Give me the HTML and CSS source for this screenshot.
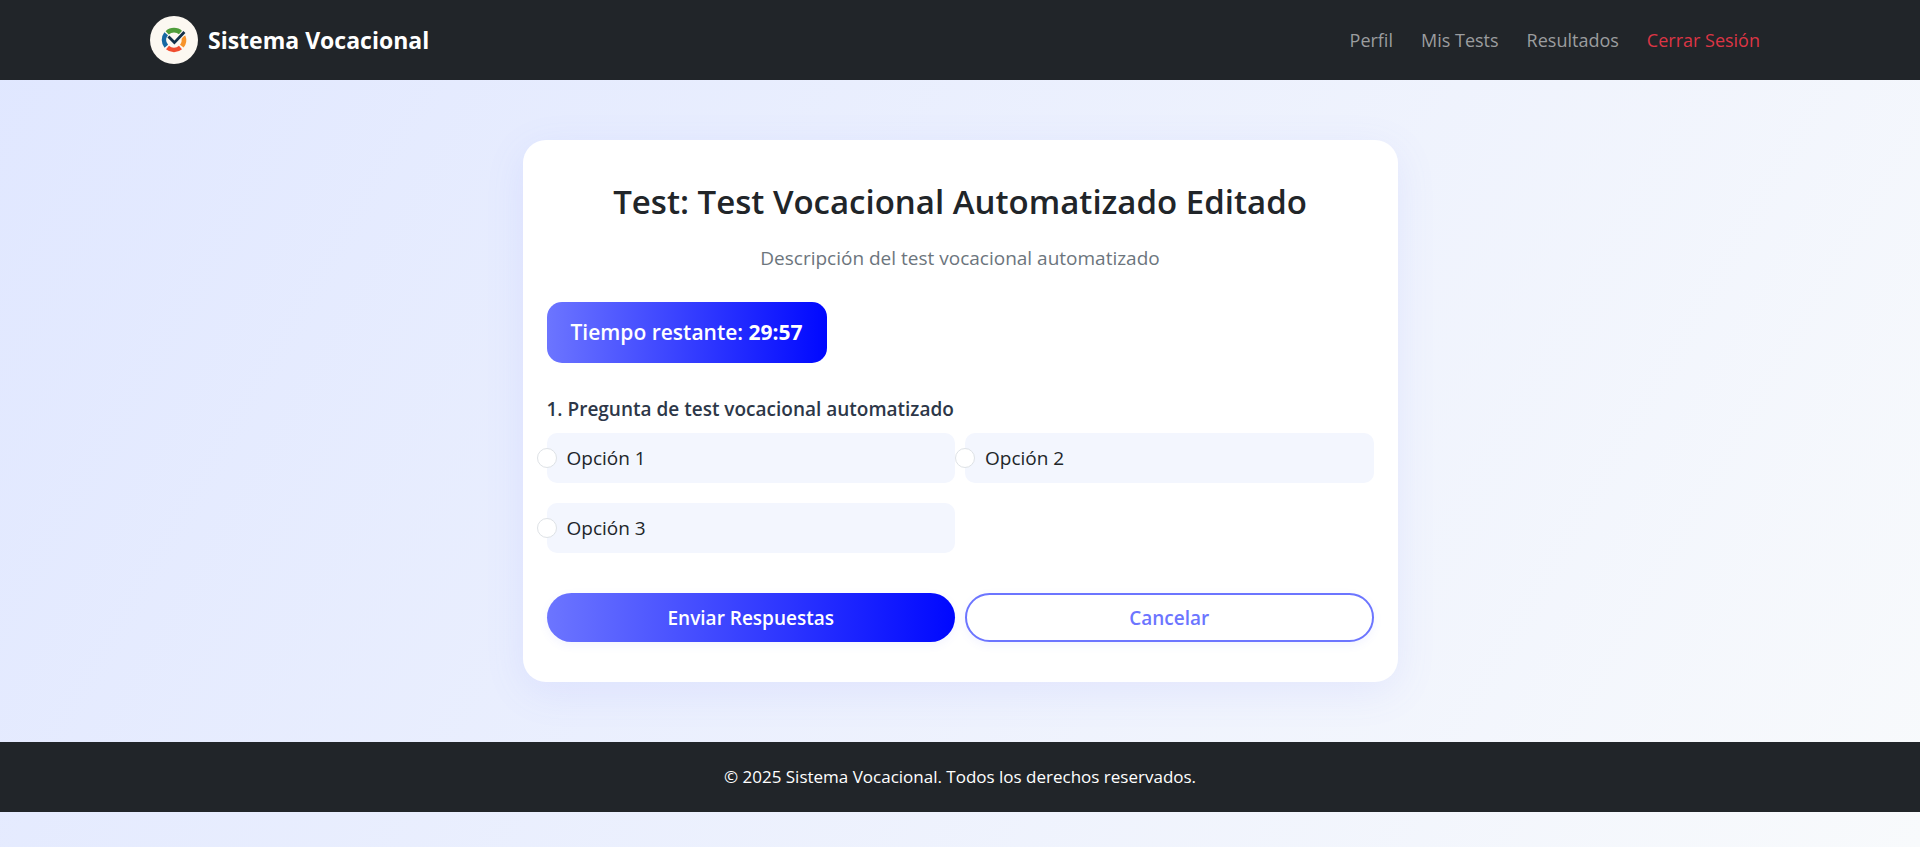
FILE: index.html
```html
<!DOCTYPE html>
<html lang="es">
<head>
<meta charset="utf-8">
<title>Sistema Vocacional</title>
<link rel="stylesheet" href="styles.css">
</head>
<body>
<header class="navbar">
  <div class="navbar-inner">
    <a class="brand" href="#">
      <svg class="brand-logo" viewBox="0 0 48 48" aria-hidden="true">
        <circle cx="24" cy="24" r="24" fill="#fcf8f1"/>
        <g fill="none" stroke-width="4.6">
          <path d="M17.2 16.8A9.9 9.9 0 0 1 30.8 16.8" stroke="#4f9d3a"/>
          <path d="M33.2 20.3A9.9 9.9 0 0 1 31.8 30.1" stroke="#f7942b"/>
          <path d="M30.5 31.5A9.9 9.9 0 0 1 17.5 31.5" stroke="#f04e30"/>
          <path d="M16.3 30.3A9.9 9.9 0 0 1 16.2 17.8" stroke="#1668a3"/>
        </g>
        <path d="M18.6 20.8L24.4 26.8L34 16.4" fill="none" stroke="#fcf8f1" stroke-width="5"/>
        <path d="M18.4 20.6L24.4 26.6L34.4 16" fill="none" stroke="#12304a" stroke-width="2.8"/>
      </svg>
      <span>Sistema Vocacional</span>
    </a>
    <nav class="menu">
      <a class="menu-link" href="#">Perfil</a>
      <a class="menu-link" href="#">Mis Tests</a>
      <a class="menu-link" href="#">Resultados</a>
      <a class="menu-link menu-link-danger" href="#">Cerrar Sesión</a>
    </nav>
  </div>
</header>
<main class="page">
  <form class="card">
    <h1 class="card-title">Test: Test Vocacional Automatizado Editado</h1>
    <p class="card-text">Descripción del test vocacional automatizado</p>
    <div class="timer">Tiempo restante: <strong>29:57</strong></div>
    <fieldset class="question">
      <legend class="question-title">1. Pregunta de test vocacional automatizado</legend>
      <div class="options">
        <div class="option"><input class="option-radio" type="radio" name="p1" id="o1"><label class="option-label" for="o1">Opción 1</label></div>
        <div class="option"><input class="option-radio" type="radio" name="p1" id="o2"><label class="option-label" for="o2">Opción 2</label></div>
        <div class="option"><input class="option-radio" type="radio" name="p1" id="o3"><label class="option-label" for="o3">Opción 3</label></div>
      </div>
    </fieldset>
    <div class="actions">
      <button class="btn btn-primary" type="submit">Enviar Respuestas</button>
      <button class="btn btn-outline" type="button">Cancelar</button>
    </div>
  </form>
</main>
<footer class="footer">© 2025 Sistema Vocacional. Todos los derechos reservados.</footer>
</body>
</html>
```
FILE: styles.css
```css
* { box-sizing: border-box; }

body {
  margin: 0;
  min-height: 100vh;
  font-family: "Open Sans", "Noto Sans", sans-serif;
  font-size: 19px;
  line-height: 30px;
  color: #212529;
  background: linear-gradient(120deg, #e0e7ff 0%, #f8fafc 100%);
}

.navbar, .footer { background: #212529; }

.navbar-inner {
  display: flex;
  align-items: center;
  justify-content: space-between;
  max-width: 1650px;
  min-height: 80px;
  margin: 0 auto;
  padding: 0 15px;
}

.brand {
  display: flex;
  align-items: center;
  gap: 10px;
  color: #fff;
  font-size: 23px;
  font-weight: 700;
  text-decoration: none;
}

.brand-logo { width: 48px; height: 48px; }

.menu { display: flex; gap: 8px; }

.menu-link {
  padding: 10px;
  color: #9b9d9f;
  font-size: 18px;
  text-decoration: none;
}

.menu-link-danger { color: #dc3545; }

.page { padding: 60px 20px; }

.card {
  max-width: 875px;
  margin: 0 auto;
  padding: 40px 24px;
  border-radius: 23px;
  background: #fff;
  box-shadow: 0 10px 40px rgba(108, 117, 255, 0.1);
}

.card-title {
  margin: 0 0 19px;
  font-size: 33px;
  font-weight: 600;
  line-height: 44px;
  text-align: center;
}

.card-text {
  margin: 0 0 29px;
  color: #6c757d;
  text-align: center;
}

.timer {
  width: fit-content;
  margin-bottom: 31px;
  padding: 15px 24px;
  border-radius: 15px;
  background: linear-gradient(90deg, #6c75ff 0%, #0008ff 100%);
  color: #fff;
  font-size: 21px;
  font-weight: 600;
  line-height: 31px;
}

.timer strong { font-weight: 700; }

.question {
  margin: 0 0 40px;
  padding: 0;
  border: 0;
}

.question-title {
  margin-bottom: 9px;
  padding: 0;
  color: #2d3748;
  font-weight: 600;
}

.options {
  display: grid;
  grid-template-columns: 1fr 1fr;
  gap: 20px 10px;
}

.option {
  display: flex;
  align-items: center;
  border-radius: 10px;
  background: #f3f6fe;
}

.option-radio {
  appearance: none;
  width: 20px;
  height: 20px;
  margin: 0 0 0 -10px;
  border: 1px solid #dee2e6;
  border-radius: 50%;
  background: #fff;
}

.option-radio:checked { border: 6px solid #4b50ff; }

.option-label { flex: 1; padding: 10px; }

.actions {
  display: grid;
  grid-template-columns: 1fr 1fr;
  gap: 10px;
}

.btn {
  height: 49px;
  border: 0;
  border-radius: 25px;
  font: inherit;
  font-weight: 600;
  box-shadow: 0 3px 10px rgba(108, 117, 255, 0.08);
}

.btn-primary {
  background: linear-gradient(90deg, #6c75ff 0%, #0008ff 100%);
  color: #fff;
}

.btn-outline {
  border: 2px solid #6c75ff;
  background: #fff;
  color: #6c75ff;
}

.footer {
  padding: 20px;
  color: #fff;
  font-size: 17px;
  text-align: center;
}
```
